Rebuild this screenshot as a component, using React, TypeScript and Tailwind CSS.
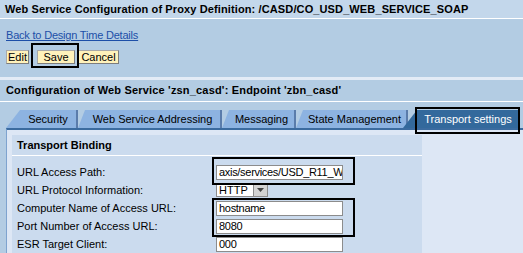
import React from "react";

const tabs = [
  { label: "Security", w: "w-[72px]", first: true },
  { label: "Web Service Addressing", w: "w-[144px]" },
  { label: "Messaging", w: "w-[74px]" },
  { label: "State Management", w: "w-[112px]" },
];

const rows = [
  { label: "URL Access Path:", value: "axis/services/USD_R11_WebService" },
  { label: "URL Protocol Information:", value: "HTTP", select: true },
  { label: "Computer Name of Access URL:", value: "hostname" },
  { label: "Port Number of Access URL:", value: "8080" },
  { label: "ESR Target Client:", value: "000" },
];

const Frame = ({ className }: { className: string }) => (
  <div className={`absolute border-2 border-black pointer-events-none ${className}`} />
);

export default function App() {
  return (
    <div className="relative flex flex-col w-[523px] h-[253px] overflow-hidden bg-[#b3cce3] text-[11px] text-black font-['Liberation_Sans',Arial,sans-serif]">
      {/* page title */}
      <div className="h-[19px] shrink-0 px-[5px] bg-[#c3d7eb] border-b border-white font-bold text-[11px] leading-[18px] tracking-[0.12px] whitespace-nowrap">
        Web Service Configuration of Proxy Definition: /CASD/CO_USD_WEB_SERVICE_SOAP
      </div>

      {/* toolbar */}
      <div className="h-[58px] shrink-0 px-[6px] pt-[10px]">
        <a className="block leading-[13px] text-[#1d4fa8] underline tracking-[-0.2px]" href="#">
          Back to Design Time Details
        </a>
        <div className="flex mt-[8px]">
          <button className="w-[23px] h-[14px] leading-[12px] bg-[#fff2bb] border border-[#a9a9a9] border-r-[#7d7d7d] border-b-[#7d7d7d] text-[11px]">
            Edit
          </button>
          <button className="ml-[8px] w-[38px] h-[14px] leading-[12px] bg-[#fff2bb] border border-[#a9a9a9] border-r-[#7d7d7d] border-b-[#7d7d7d] text-[11px]">
            Save
          </button>
          <button className="ml-[3px] w-[41px] h-[14px] leading-[12px] bg-[#fff2bb] border border-[#a9a9a9] border-r-[#7d7d7d] border-b-[#7d7d7d] text-[11px]">
            Cancel
          </button>
        </div>
      </div>
      <div className="h-[3px] shrink-0 bg-[#e3ebf6]" />

      {/* section header */}
      <div className="h-[22px] shrink-0 px-[6px] border-b border-white font-bold leading-[21px] tracking-[0.18px] whitespace-nowrap">
        Configuration of Web Service 'zsn_casd': Endpoint 'zbn_casd'
      </div>

      {/* tab strip */}
      <div className="h-[26px] shrink-0 flex items-end pl-[6px]">
        {tabs.map((t) => (
          <div
            key={t.label}
            className={`${t.w} h-[18px] flex items-center justify-center bg-[#8db3e1] border-r-2 border-[#5a7cab] whitespace-nowrap ${
              t.first
                ? "pl-[14px] [clip-path:polygon(14px_0,100%_0,100%_100%,0_100%)]"
                : "pl-[7px] [clip-path:polygon(7px_0,100%_0,100%_100%,0_100%)]"
            }`}
          >
            {t.label}
          </div>
        ))}
        <div className="relative z-10 -ml-[5px] w-[116px] h-[18px] flex items-center justify-center pl-[14px] bg-[#33699c] text-white whitespace-nowrap [clip-path:polygon(14px_0,100%_0,100%_100%,0_100%)]">
          Transport settings
        </div>
      </div>

      {/* tab panel */}
      <div className="flex-1 ml-[6px] border-t-2 border-l border-t-[#3b6b9f] border-l-[#7ea3cf] bg-[#dde7f5] pt-[5px] pl-[5px]">
        <div className="w-[410px] h-full bg-[#cbdbee]">
          <div className="h-[21px] pl-[5px] border-b border-white font-bold leading-[20px]">
            Transport Binding
          </div>
          <div className="pt-[7px] pl-[5px]">
            {rows.map((r) => (
              <div key={r.label} className="flex items-center h-[18px]">
                <div className="w-[199px] whitespace-nowrap">{r.label}</div>
                {r.select ? (
                  <div className="flex h-[14px]">
                    <div className="w-[38px] h-[14px] bg-white border border-[#8c8c8c] pl-[2px] leading-[12px]">
                      {r.value}
                    </div>
                    <div className="w-[14px] h-[14px] flex items-center justify-center bg-[#d3d3d3] border border-[#8c8c8c] border-l-0">
                      <svg width="7" height="4" viewBox="0 0 7 4">
                        <path d="M0 0h7L3.5 4z" fill="#444" />
                      </svg>
                    </div>
                  </div>
                ) : (
                  <div className="w-[127px] h-[15px] bg-white border border-[#8c8c8c] pl-[2px] leading-[13px] overflow-hidden whitespace-nowrap tracking-[-0.3px]">
                    {r.value}
                  </div>
                )}
              </div>
            ))}
          </div>
        </div>
      </div>

      {/* annotation frames */}
      <Frame className="left-[31px] top-[43px] w-[48px] h-[25px]" />
      <Frame className="left-[415px] top-[107px] w-[105px] h-[27px] z-20" />
      <Frame className="left-[212px] top-[157px] w-[143px] h-[28px]" />
      <Frame className="left-[212px] top-[198px] w-[143px] h-[39px]" />
    </div>
  );
}
